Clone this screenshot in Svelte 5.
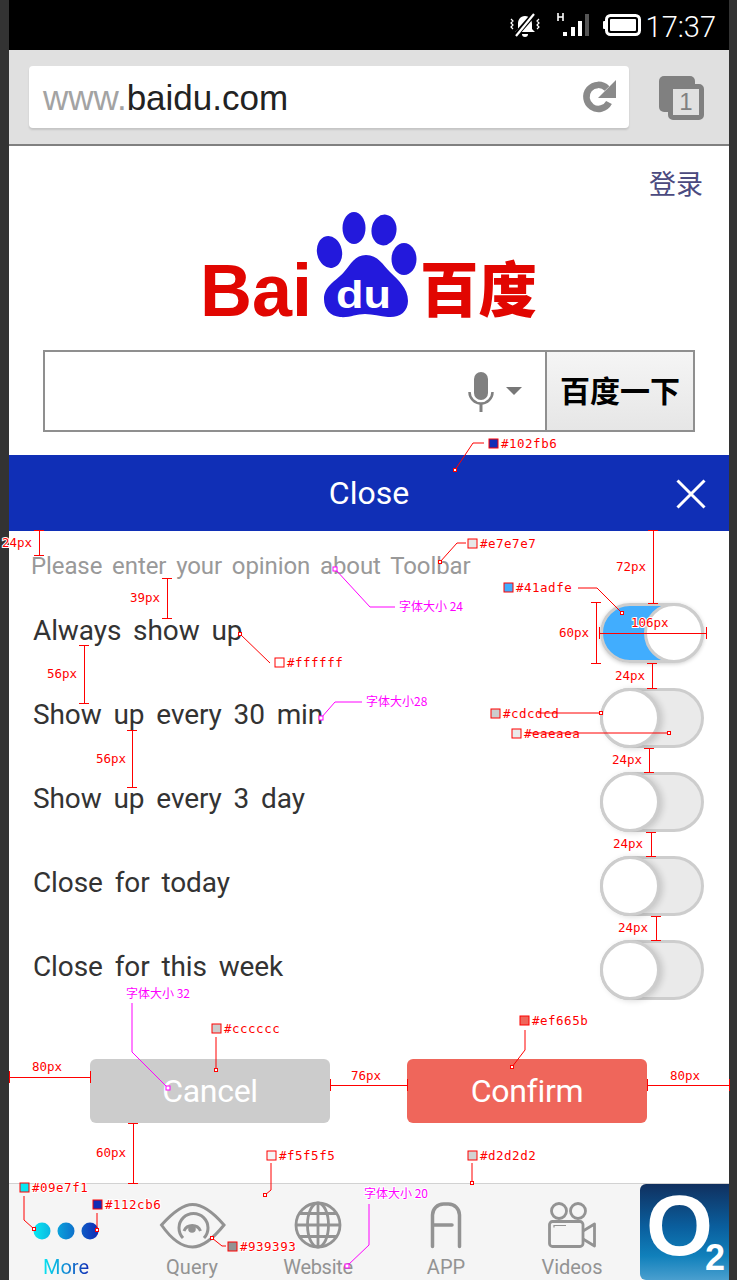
<script>
  const options = ['Always show up', 'Show up every 30 min', 'Show up every 3 day', 'Close for today', 'Close for this week'];

  const swatches = [
    { x: 489, y: 439, fill: '#102fb6', label: '#102fb6' },
    { x: 468, y: 539, fill: '#e7e7e7', label: '#e7e7e7' },
    { x: 504, y: 583, fill: '#41adfe', label: '#41adfe' },
    { x: 275, y: 658, fill: '#ffffff', label: '#ffffff' },
    { x: 491, y: 709, fill: '#cdcdcd', label: '#cdcdcd' },
    { x: 512, y: 729, fill: '#eaeaea', label: '#eaeaea' },
    { x: 212, y: 1024, fill: '#cccccc', label: '#cccccc' },
    { x: 520, y: 1016, fill: '#ef665b', label: '#ef665b' },
    { x: 267, y: 1151, fill: '#f5f5f5', label: '#f5f5f5' },
    { x: 468, y: 1151, fill: '#d2d2d2', label: '#d2d2d2' },
    { x: 20, y: 1183, fill: '#09e7f1', label: '#09e7f1' },
    { x: 93, y: 1200, fill: '#112cb6', label: '#112cb6' },
    { x: 228, y: 1242, fill: '#939393', label: '#939393' }
  ];

  const leaders = [
    { d: 'M484 443H473L455 470', end: [455, 470] },
    { d: 'M466 543H457L440 562', end: [440, 562] },
    { d: 'M578 588H597L622 613', end: [622, 613] },
    { d: 'M240 634L270 663', end: [240, 634] },
    { d: 'M538 713H601', end: [601, 713] },
    { d: 'M527 733H669', end: [669, 733] },
    { d: 'M216 1037V1070', end: [216, 1070] },
    { d: 'M525 1030V1050L512 1067', end: [512, 1067] },
    { d: 'M271 1163V1190L265 1195', end: [265, 1195] },
    { d: 'M472 1163V1183', end: [472, 1183] },
    { d: 'M24 1196V1220L34 1229', end: [34, 1229] },
    { d: 'M97 1213V1230', end: [97, 1230] },
    { d: 'M212 1238L222 1246H226', end: [212, 1238] }
  ];

  const vBrackets = [
    { x: 39, a: 530, b: 555, label: '24px', tx: 2, ty: 547 },
    { x: 653, a: 530, b: 603, label: '72px', tx: 616, ty: 571 },
    { x: 167, a: 578, b: 618, label: '39px', tx: 130, ty: 602 },
    { x: 596, a: 602, b: 663, label: '60px', tx: 559, ty: 637 },
    { x: 652, a: 663, b: 688, label: '24px', tx: 615, ty: 680 },
    { x: 84, a: 645, b: 703, label: '56px', tx: 47, ty: 678 },
    { x: 649, a: 748, b: 772, label: '24px', tx: 612, ty: 764 },
    { x: 132, a: 730, b: 787, label: '56px', tx: 96, ty: 763 },
    { x: 651, a: 832, b: 856, label: '24px', tx: 613, ty: 848 },
    { x: 656, a: 916, b: 940, label: '24px', tx: 618, ty: 932 },
    { x: 133, a: 1123, b: 1183, label: '60px', tx: 96, ty: 1157 }
  ];

  const hBrackets = [
    { y: 633, a: 599, b: 706, label: '106px', tx: 631, ty: 627 },
    { y: 1077, a: 9, b: 90, label: '80px', tx: 32, ty: 1071 },
    { y: 1085, a: 330, b: 407, label: '76px', tx: 351, ty: 1080 },
    { y: 1085, a: 647, b: 729, label: '80px', tx: 670, ty: 1080 }
  ];

  const notes = [
    { x: 399, y: 611, label: '字体大小 24', d: 'M335 569L370 607H395', end: [335, 569] },
    { x: 366, y: 706, label: '字体大小28', d: 'M321 718L335 702H362', end: [321, 718] },
    { x: 126, y: 998, label: '字体大小 32', d: 'M132 1003V1052L168 1088', end: [168, 1088] },
    { x: 364, y: 1198, label: '字体大小  20', d: 'M369 1204V1245L347 1266', end: [347, 1266] }
  ];
</script>

<div class="page">
  <div class="frame">
    <header class="status">
      <svg class="st-bell" viewBox="0 0 32 24" aria-hidden="true">
        <path d="M16 3c-5 0-7 4-7 8v5l-3 3h20l-3-3v-5c0-4-2-8-7-8z" fill="#fff" />
        <path d="M13 21h6a3 3 0 0 1-6 0z" fill="#fff" />
        <path d="M25 1L6 23" stroke="#000" stroke-width="5" />
        <path d="M25 1L7 23" stroke="#fff" stroke-width="2.2" />
        <path d="M2 6l2 2-2 2 2 2-2 2 2 2M30 6l-2 2 2 2-2 2 2 2-2 2" stroke="#fff" stroke-width="1.2" fill="none" />
      </svg>
      <svg class="st-signal" viewBox="-4 0 34 24" aria-hidden="true">
        <path d="M-2 0v8M3 0v8M-2 4h5" stroke="#fff" stroke-width="1.6" fill="none" />
        <rect x="3" y="19" width="4" height="4" fill="#fff" />
        <rect x="11" y="14" width="4" height="9" fill="#fff" />
        <rect x="18" y="8" width="4" height="15" fill="#fff" />
        <rect x="25" y="1" width="4" height="22" fill="#555" />
      </svg>
      <svg class="st-battery" viewBox="0 0 38 22" aria-hidden="true">
        <rect x="3.5" y="1.5" width="33" height="19" rx="4" fill="none" stroke="#fff" stroke-width="3" />
        <rect x="0" y="7" width="3" height="8" rx="1" fill="#fff" />
        <rect x="7" y="5" width="26" height="12" rx="1" fill="#fff" />
      </svg>
      <span class="clock">17:37</span>
    </header>

    <div class="toolbar">
      <div class="omnibox">
        <span class="url"><span class="url-dim">www.</span>baidu.com</span>
        <svg class="reload" viewBox="0 0 36 36" aria-hidden="true">
          <path d="M28 23.5A12 12 0 1 1 26 9.5" fill="none" stroke="#8a8a8a" stroke-width="6.5" />
          <path d="M35 1V19H17z" fill="#8a8a8a" />
        </svg>
      </div>
      <div class="tabs">
        <span class="tab-back"></span>
        <span class="tab-front">1</span>
      </div>
    </div>

    <section class="home">
      <a class="login" href="#login">登录</a>
      <svg class="logo" viewBox="200 210 340 110" aria-label="Baidu 百度">
        <text class="logo-bai" x="200" y="316" textLength="112" lengthAdjust="spacingAndGlyphs">Bai</text>
        <text class="logo-cn" x="420" y="312" textLength="117" lengthAdjust="spacingAndGlyphs">百度</text>
        <ellipse cx="354" cy="228" rx="11.5" ry="16" fill="#2319dc" />
        <ellipse cx="384" cy="230" rx="12.5" ry="15.5" fill="#2319dc" transform="rotate(8 384 230)" />
        <ellipse cx="329.5" cy="252" rx="12.5" ry="16" fill="#2319dc" transform="rotate(-12 329.5 252)" />
        <ellipse cx="404" cy="259" rx="12.5" ry="16" fill="#2319dc" />
        <path d="M366 255C378 255 383 265 390 272C398 280 408 288 408 301C408 312 399 318 388 317C380 316.500 373 314 365 314C356 314 349 318 340 317C330 316 324 309 324 299C324 286 336 281 344 272C351 264 355 255 366 255z" fill="#2319dc" />
        <text class="logo-du" x="336" y="308" textLength="55" lengthAdjust="spacingAndGlyphs">du</text>
      </svg>
      <div class="search">
        <div class="search-input">
          <svg class="mic" viewBox="0 0 26 40" aria-hidden="true">
            <rect x="6" y="0" width="14" height="28" rx="7" fill="#808080" />
            <path d="M1.500 20a11.500 11.500 0 0 0 23 0" fill="none" stroke="#808080" stroke-width="2.500" />
            <path d="M13 31v9" stroke="#808080" stroke-width="3" />
          </svg>
          <span class="caret"></span>
        </div>
        <button class="search-btn">百度一下</button>
      </div>
    </section>

    <div class="sheet-head">
      <span>Close</span>
      <svg class="x" viewBox="0 0 30 30" aria-hidden="true">
        <path d="M1.500 1.500L28.500 28.500M28.500 1.500L1.500 28.500" stroke="#fff" stroke-width="3" />
      </svg>
    </div>

    <main class="sheet">
      <p class="hint">Please enter your opinion about Toolbar</p>
      <ul class="rows">
        {#each options as label, i}
          <li class="row">
            <span class="row-label">{label}</span>
            <span class="toggle" class:on={i === 0}><span class="knob"></span></span>
          </li>
        {/each}
      </ul>
      <div class="actions">
        <button class="btn cancel">Cancel</button>
        <button class="btn confirm">Confirm</button>
      </div>
    </main>

    <nav class="nav">
      <div class="nav-item">
        <svg class="ni" viewBox="0 1200 132 50" width="132" height="50" aria-hidden="true">
          <defs>
            <linearGradient id="dots" gradientUnits="userSpaceOnUse" x1="34" y1="0" x2="98" y2="0">
              <stop offset="0" stop-color="#09e7f1" />
              <stop offset="1" stop-color="#112cb6" />
            </linearGradient>
          </defs>
          <circle cx="42" cy="1231" r="8.500" fill="url(#dots)" />
          <circle cx="66" cy="1231" r="8.500" fill="url(#dots)" />
          <circle cx="90" cy="1231" r="8.500" fill="url(#dots)" />
        </svg>
        <span class="more">More</span>
      </div>
      <div class="nav-item">
        <svg class="ni" viewBox="159 1200 67 50" width="67" height="50" aria-hidden="true">
          <path d="M161.500 1225C175 1210 185 1204.500 192.500 1204.500C202 1204.500 212 1211 224 1225C212 1240 202 1247 192.500 1247C183 1247 172 1240 161.500 1225z" fill="none" stroke="#939393" stroke-width="3" />
          <path d="M204 1238A14.500 14.500 0 1 0 183 1238" fill="none" stroke="#939393" stroke-width="3" />
          <path d="M184 1231A9 9 0 0 1 200.500 1231" fill="none" stroke="#939393" stroke-width="3" />
          <circle cx="192" cy="1229" r="3.800" fill="#939393" />
        </svg>
        <span>Query</span>
      </div>
      <div class="nav-item">
        <svg class="ni" viewBox="295 1200 48 50" width="48" height="50" aria-hidden="true">
          <g fill="none" stroke="#939393" stroke-width="2.800">
            <circle cx="319" cy="1225" r="22" />
            <ellipse cx="319" cy="1225" rx="10.500" ry="22" />
            <path d="M319 1203V1247M297 1225H341M300.500 1213.500H337.500M300.500 1236.500H337.500" />
          </g>
        </svg>
        <span class="tight">Website</span>
      </div>
      <div class="nav-item shift">
        <svg class="ni" viewBox="428 1200 36 50" width="36" height="50" aria-hidden="true">
          <path d="M432.500 1246.500V1215A11 11 0 0 1 443.500 1204H448.500A11 11 0 0 1 459.500 1215V1246.500M432.500 1225H452" fill="none" stroke="#939393" stroke-width="3.500" stroke-linecap="round" />
        </svg>
        <span>APP</span>
      </div>
      <div class="nav-item">
        <svg class="ni" viewBox="546 1200 52 50" width="52" height="50" aria-hidden="true">
          <g fill="none" stroke="#939393" stroke-width="2.800">
            <circle cx="559" cy="1211" r="7.500" />
            <circle cx="578" cy="1211" r="7.500" />
            <rect x="549.500" y="1221.500" width="33.500" height="25" rx="3" />
            <path d="M583 1231L594.500 1224V1246L583 1239" stroke-linejoin="round" />
            <path d="M554 1227.500V1225.500H566" stroke-width="1.200" />
          </g>
        </svg>
        <span>Videos</span>
      </div>
      <div class="o2">
        <span class="o2-o">O</span><span class="o2-two">2</span>
      </div>
    </nav>
  </div>

  <svg class="marks" viewBox="0 0 737 1280" width="737" height="1280" aria-hidden="true">
    {#each swatches as s}
      <rect x={s.x} y={s.y} width="9" height="9" fill={s.fill} stroke="#ff0000" />
      <text class="mk mk-sw" x={s.x + 12} y={s.y + 9}>{s.label}</text>
    {/each}
    {#each leaders as l}
      <path d={l.d} fill="none" stroke="#ff0000" />
      <rect x={l.end[0] - 1.500} y={l.end[1] - 1.500} width="3" height="3" fill="#fff" stroke="#ff0000" />
    {/each}
    {#each vBrackets as b}
      <path d="M{b.x - 5} {b.a}.5H{b.x + 5}M{b.x}.5 {b.a}V{b.b}M{b.x - 5} {b.b}.5H{b.x + 5}" fill="none" stroke="#ff0000" />
      <text class="mk" x={b.tx} y={b.ty}>{b.label}</text>
    {/each}
    {#each hBrackets as b}
      <path d="M{b.a}.5 {b.y - 6}V{b.y + 6}M{b.a} {b.y}.5H{b.b}M{b.b}.5 {b.y - 6}V{b.y + 6}" fill="none" stroke="#ff0000" />
      <text class="mk" x={b.tx} y={b.ty}>{b.label}</text>
    {/each}
    {#each notes as n}
      <path d={n.d} fill="none" stroke="#ff00ff" />
      <rect x={n.end[0] - 2} y={n.end[1] - 2} width="4" height="4" fill="#fff" stroke="#ff00ff" />
      <text class="mk-note" x={n.x} y={n.y}>{n.label}</text>
    {/each}
  </svg>
</div>

<style>
  :global(body) {
    margin: 0;
    background: #333333;
  }

  .page {
    position: relative;
    width: 737px;
    height: 1280px;
    overflow: hidden;
    background: #333333;
    font-family: Roboto, "Noto Sans CJK SC", sans-serif;
  }

  .frame {
    width: 720px;
    margin-left: 9px;
    height: 1280px;
    display: flex;
    flex-direction: column;
    background: #fff;
  }

  .status {
    height: 50px;
    background: #000;
    display: flex;
    align-items: center;
    justify-content: flex-end;
    padding-right: 13px;
    flex: none;
  }

  .st-bell { width: 32px; height: 24px; margin-right: 15px; }
  .st-signal { width: 34px; height: 24px; margin-right: 13px; }
  .st-battery { width: 38px; height: 22px; margin-right: 5px; }

  .clock {
    color: #fff;
    font-size: 29px;
    font-weight: 300;
    line-height: 50px;
    padding-top: 3px;
  }

  .toolbar {
    height: 78px;
    flex: none;
    background: #e0e0e0;
    border-bottom: 2px solid #808080;
    display: flex;
    align-items: flex-start;
    padding: 16px 25px 0 20px;
    box-sizing: content-box;
  }

  .omnibox {
    width: 600px;
    height: 62px;
    background: #fff;
    border-radius: 4px;
    box-shadow: 0 2px 2px rgba(0, 0, 0, 0.12);
    display: flex;
    align-items: center;
    justify-content: space-between;
    padding: 0 12px 0 14px;
    box-sizing: border-box;
  }

  .url {
    font-family: "Liberation Sans", sans-serif;
    font-size: 35px;
    color: #222;
    padding-top: 2px;
  }

  .url-dim { color: #a3a3a3; }

  .reload { width: 36px; height: 36px; }

  .tabs {
    position: relative;
    width: 45px;
    height: 44px;
    margin: 10px 0 0 30px;
  }

  .tab-back {
    position: absolute;
    left: 0;
    top: 0;
    width: 36px;
    height: 36px;
    background: #808080;
    border-radius: 5px;
  }

  .tab-front {
    position: absolute;
    right: 0;
    bottom: 0;
    width: 36px;
    height: 36px;
    box-sizing: border-box;
    border: 5px solid #808080;
    border-radius: 5px;
    background: #e0e0e0;
    color: #808080;
    font: 24px/26px "Liberation Sans", sans-serif;
    text-align: center;
  }

  .home {
    height: 309px;
    flex: none;
    display: flex;
    flex-direction: column;
    position: relative;
    box-sizing: border-box;
    padding: 22px 26px 0 34px;
  }

  .login {
    align-self: flex-end;
    color: #4b4a80;
    font-size: 27px;
    line-height: 30px;
    text-decoration: none;
    font-family: "Noto Sans CJK SC", sans-serif;
    font-weight: 400;
  }

  .logo {
    width: 340px;
    height: 110px;
    margin: 12px 0 0 157px;
  }

  .logo-bai {
    font: 700 74px "Liberation Sans", sans-serif;
    fill: #e10601;
  }

  .logo-cn {
    font: 900 60px "Noto Sans CJK SC", sans-serif;
    fill: #e10601;
  }

  .logo-du {
    font: 700 38px "Liberation Sans", sans-serif;
    fill: #fff;
  }

  .search {
    width: 652px;
    height: 82px;
    margin-top: 30px;
    box-sizing: border-box;
    border: 2px solid #8f8f8f;
    display: flex;
  }

  .search-input {
    flex: 1;
    display: flex;
    align-items: center;
    justify-content: flex-end;
    padding-right: 23px;
    gap: 12px;
    background: #fff;
  }

  .mic { width: 26px; height: 40px; margin-top: 2px; }

  .caret {
    width: 0;
    height: 0;
    border: 8px solid transparent;
    border-top: 8px solid #777;
    border-bottom: 0;
  }

  .search-btn {
    width: 148px;
    border: 0;
    border-left: 2px solid #8f8f8f;
    background: linear-gradient(#f5f5f5, #e6e6e6);
    font: 700 30px "Noto Sans CJK SC", sans-serif;
    color: #000;
    padding: 0 0 4px;
  }

  .sheet-head {
    height: 76px;
    flex: none;
    background: #102fb6;
    color: #fff;
    position: relative;
    display: flex;
    align-items: center;
    justify-content: center;
    font-size: 32px;
  }

  .x {
    position: absolute;
    right: 23px;
    top: 24px;
    width: 30px;
    height: 30px;
  }

  .sheet {
    flex: none;
    padding-top: 20px;
  }

  .hint {
    margin: 0 0 22px 22px;
    color: #999;
    font-size: 24px;
    line-height: 30px;
    word-spacing: 4px;
    letter-spacing: -0.1px;
    white-space: nowrap;
  }

  .rows {
    list-style: none;
    margin: 0;
    padding: 0 25px 0 24px;
    display: flex;
    flex-direction: column;
    gap: 24px;
  }

  .row {
    height: 60px;
    display: flex;
    align-items: center;
    justify-content: space-between;
  }

  .row:first-child { margin-bottom: 1px; }

  .row-label {
    color: #333;
    font-size: 28px;
    word-spacing: 5px;
    letter-spacing: -0.1px;
    padding-bottom: 8px;
  }

  .row:first-child .row-label { padding-bottom: 6px; }

  .toggle {
    position: relative;
    width: 104px;
    height: 60px;
    box-sizing: border-box;
    border-radius: 30px;
    background: #eaeaea;
    border: 3px solid #cdcdcd;
  }

  .toggle.on {
    background: linear-gradient(90deg, #41adfe 60%, #fff 60%);
    box-shadow: 0 1px 4px rgba(0, 0, 0, 0.2);
  }

  .knob {
    position: absolute;
    left: -3px;
    top: -3px;
    width: 60px;
    height: 60px;
    box-sizing: border-box;
    background: #fff;
    border: 3px solid #cdcdcd;
    border-radius: 50%;
    box-shadow: 3px 1px 6px rgba(0, 0, 0, 0.15);
  }

  .toggle.on .knob {
    left: auto;
    right: -3px;
    box-shadow: none;
  }

  .actions {
    display: flex;
    gap: 77px;
    margin: 59px 0 60px 81px;
  }

  .btn {
    width: 240px;
    height: 64px;
    border: 0;
    border-radius: 6px;
    color: #fff;
    font: 32px Roboto, sans-serif;
    letter-spacing: -0.3px;
    padding: 0;
  }

  .cancel { background: #cccccc; }
  .confirm { background: #ef665b; }

  .nav {
    height: 97px;
    flex: none;
    box-sizing: border-box;
    background: #f5f5f5;
    border-top: 1px solid #d2d2d2;
    display: flex;
    padding-left: 0;
    color: #939393;
    font-size: 20px;
  }

  .nav-item {
    width: 126px;
    flex: none;
    display: flex;
    flex-direction: column;
    align-items: center;
    padding-top: 16px;
    box-sizing: border-box;
  }

  .nav-item:first-child { margin-left: -6px; }
  .nav-item.shift { margin-left: 2px; }

  .ni { flex: none; height: 50px; }

  .nav-item span {
    line-height: 24px;
    margin-top: 5px;
  }

  .nav-item span.tight { letter-spacing: -0.3px; }

  .more {
    background: linear-gradient(90deg, #09e7f1, #112cb6);
    -webkit-background-clip: text;
    background-clip: text;
    color: transparent;
  }

  .o2 {
    margin-left: auto;
    width: 89px;
    position: relative;
    background: linear-gradient(#10305f 0%, #0a5f9e 45%, #1080bb 75%, #4a9fcf 100%);
    border-radius: 6px 0 0 6px;
    overflow: hidden;
    color: #fff;
    font-family: "Liberation Sans", sans-serif;
    font-weight: 700;
  }

  .o2-o {
    position: absolute;
    left: 6px;
    top: -2px;
    font-size: 86px;
    line-height: 86px;
  }

  .o2-two {
    position: absolute;
    left: 65px;
    top: 56px;
    font-size: 36px;
    line-height: 36px;
  }

  .marks {
    position: absolute;
    left: 0;
    top: 0;
    pointer-events: none;
  }

  .mk {
    font: 12.500px "DejaVu Sans Mono", monospace;
    fill: #ff0000;
    paint-order: stroke;
    stroke: #fff;
    stroke-width: 2px;
  }

  .mk-sw { letter-spacing: 0.5px; }

  .mk-note {
    font: 12px "Noto Sans CJK SC", sans-serif;
    fill: #ff00ff;
    paint-order: stroke;
    stroke: #fff;
    stroke-width: 2px;
  }
</style>
